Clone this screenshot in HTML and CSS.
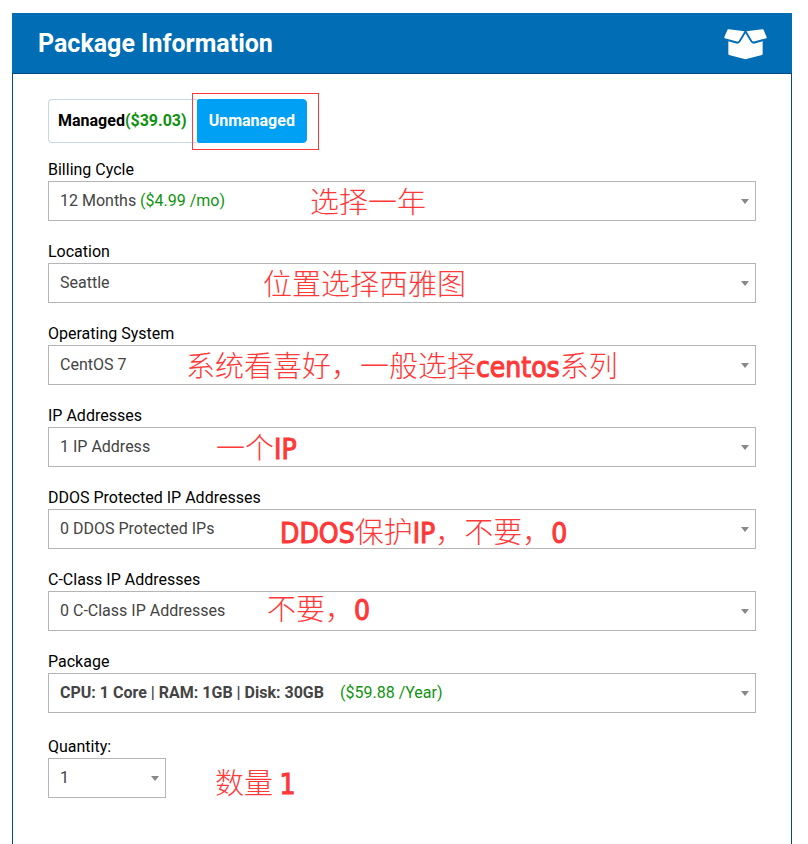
FILE: index.html
```html
<!DOCTYPE html>
<html lang="en">
<head>
<meta charset="utf-8">
<meta name="viewport" content="width=device-width, initial-scale=1">
<title>Package Information</title>
<link rel="stylesheet" href="styles.css">
</head>
<body>
<main class="panel">
  <header class="panel-header">
    <h1>Package Information</h1>
    <svg class="box-icon" viewBox="0 0 130 94" aria-hidden="true">
      <path d="M14 1 62 7 45 36Q43 39 39 38L2 28Q0 27 1 24L10 3Q11 0 14 1Z"/>
      <path d="M116 1 68 7 85 36Q87 39 91 38L128 28Q130 27 129 24L120 3Q119 0 116 1Z"/>
      <path d="M65 13 80 38Q85 46 93 44L117 37V76Q117 78 115 79L65 92 15 79Q13 78 13 76V37L37 44Q45 46 50 38Z"/>
    </svg>
  </header>
  <form class="panel-body">
    <div class="toggle">
      <button type="button" class="toggle-option">Managed<span class="price">($39.03)</span></button>
      <button type="button" class="toggle-option selected" aria-pressed="true">Unmanaged</button>
      <span class="highlight"></span>
    </div>

    <div class="field">
      <label for="cycle">Billing Cycle</label>
      <div class="control">
        <select id="cycle"><option>12 Months</option></select>
        <span class="price inline-price cycle-price">($4.99 /mo)</span>
        <span class="note note-cycle" lang="zh-CN">选择一年</span>
      </div>
    </div>

    <div class="field">
      <label for="location">Location</label>
      <div class="control">
        <select id="location"><option>Seattle</option></select>
        <span class="note note-location" lang="zh-CN">位置选择西雅图</span>
      </div>
    </div>

    <div class="field">
      <label for="os">Operating System</label>
      <div class="control">
        <select id="os"><option>CentOS 7</option></select>
        <span class="note note-os" lang="zh-CN">系统看喜好，一般选择<b>centos</b>系列</span>
      </div>
    </div>

    <div class="field">
      <label for="ip">IP Addresses</label>
      <div class="control">
        <select id="ip"><option>1 IP Address</option></select>
        <span class="note note-ip" lang="zh-CN">一个<b>IP</b></span>
      </div>
    </div>

    <div class="field">
      <label for="ddos">DDOS Protected IP Addresses</label>
      <div class="control">
        <select id="ddos"><option>0 DDOS Protected IPs</option></select>
        <span class="note note-ddos" lang="zh-CN"><b>DDOS</b>保护<b>IP</b>，不要，<b>0</b></span>
      </div>
    </div>

    <div class="field">
      <label for="cclass">C-Class IP Addresses</label>
      <div class="control">
        <select id="cclass"><option>0 C-Class IP Addresses</option></select>
        <span class="note note-cclass" lang="zh-CN">不要，<b>0</b></span>
      </div>
    </div>

    <div class="field">
      <label for="package">Package</label>
      <div class="control">
        <select id="package" class="strong"><option>CPU: 1 Core | RAM: 1GB | Disk: 30GB</option></select>
        <span class="price inline-price package-price">($59.88 /Year)</span>
      </div>
    </div>

    <div class="field quantity">
      <label for="quantity">Quantity:</label>
      <div class="control">
        <select id="quantity"><option>1</option></select>
        <span class="note note-quantity" lang="zh-CN">数量 <b>1</b></span>
      </div>
    </div>
  </form>
</main>
</body>
</html>
```
FILE: styles.css
```css
* {
  box-sizing: border-box;
}

body {
  display: flex;
  min-height: 100vh;
  margin: 0;
  padding: 13px 16px 0 12px;
  background: #fff;
  color: #000;
  font: 16px/24px Roboto, sans-serif;
}

.panel {
  flex: 1;
  border: 1px solid #004a87;
  border-width: 0 1px;
}

.panel-header {
  display: flex;
  align-items: center;
  justify-content: space-between;
  height: 61px;
  margin: 0 -1px;
  padding: 2px 25px 0 26px;
  background: #006db4;
  border-bottom: 1px solid #004a87;
  color: #fff;
}

h1 {
  margin: 0;
  font-size: 25px;
  font-weight: 700;
}

.box-icon {
  width: 43px;
  height: 31px;
  fill: #fff;
}

.panel-body {
  padding: 25px 35px 0;
}

.toggle {
  position: relative;
  display: flex;
  width: fit-content;
  margin-bottom: 16px;
}

.toggle-option {
  height: 44px;
  padding: 0 10px 0 9px;
  border: 1px solid #c8d8e8;
  border-radius: 4px 0 0 4px;
  border-right-width: 0;
  background: #fff;
  color: #000;
  font: inherit;
  font-weight: 700;
}

.toggle-option.selected {
  padding: 0 11px;
  border: 1px solid #00a0f5;
  border-radius: 2px 4px 4px 2px;
  background: #00a0f5;
  color: #fff;
}

.price {
  color: #0f930f;
}

.highlight {
  position: absolute;
  top: -6px;
  right: -12px;
  width: 127px;
  height: 57px;
  border: 1px solid #ff3838;
  pointer-events: none;
}

.field {
  margin-bottom: 20px;
}

.field label {
  display: block;
  line-height: 22px;
}

.control {
  position: relative;
}

.control::after {
  content: "";
  position: absolute;
  top: 18px;
  right: 7px;
  border: 4px solid transparent;
  border-top: 5px solid #888;
  border-bottom: 0;
  pointer-events: none;
}

select {
  display: block;
  width: 100%;
  height: 40px;
  padding: 0 24px 0 11px;
  border: 1px solid #b5b5b5;
  border-radius: 0;
  appearance: none;
  background: #fff;
  color: #444;
  font: inherit;
}

select.strong {
  font-weight: 700;
}

.inline-price {
  position: absolute;
  top: 8px;
  pointer-events: none;
}

.cycle-price {
  left: 92px;
}

.package-price {
  left: 292px;
}

.quantity {
  margin-top: 23px;
}

.quantity .control {
  width: 118px;
}

.note {
  position: absolute;
  top: -1px;
  color: #ff3838;
  font: 300 29px/40px "Noto Sans CJK SC", sans-serif;
  white-space: nowrap;
  pointer-events: none;
}

.note b {
  font-family: "DejaVu Sans Condensed", "DejaVu Sans", sans-serif;
  font-size: 28px;
  font-weight: 400;
  -webkit-text-stroke: 1px #ff3838;
}

.note-cycle {
  left: 262px;
}

.note-location {
  left: 215px;
}

.note-os {
  left: 138px;
}

.note-ip {
  left: 168px;
}

.note-ddos {
  top: 1px;
  left: 232px;
}

.note-cclass {
  top: -4px;
  left: 219px;
}

.note-quantity {
  top: 3px;
  left: 167px;
}
```
